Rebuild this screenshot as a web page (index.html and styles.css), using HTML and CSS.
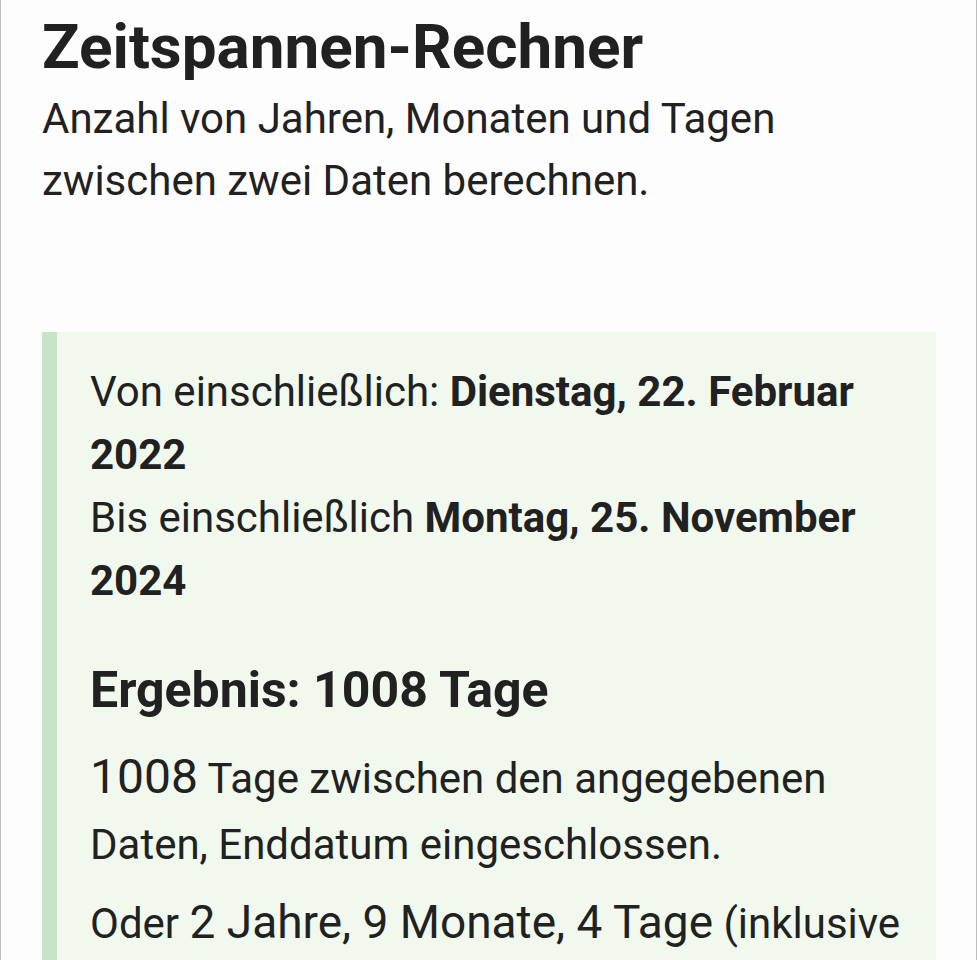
FILE: index.html
```html
<!DOCTYPE html>
<html lang="de">
<head>
    <meta charset="UTF-8">
    <meta name="viewport" content="width=device-width, initial-scale=1.0">
    <title>Zeitspannen-Rechner</title>
    <link rel="stylesheet" href="styles.css">
</head>
<body>
    <div class="page">
        <h1>Zeitspannen-Rechner</h1>
        <p class="subtitle">Anzahl von Jahren, Monaten und Tagen zwischen zwei Daten berechnen.</p>

        <div class="result-box">
            <p class="dates">
                Von einschließlich: <b>Dienstag, 22. Februar 2022</b><br>
                Bis einschließlich <b>Montag, 25. November 2024</b>
            </p>

            <h2>Ergebnis: 1008 Tage</h2>

            <p><span class="big">1008</span> Tage zwischen den angegebenen Daten, Enddatum eingeschlossen.</p>
            <p>Oder <span class="mid">2 Jahre, 9 Monate, 4 Tage</span> (inklusive Enddatum).</p>
        </div>
    </div>
</body>
</html>
```

FILE: styles.css
```css
html, body {
    margin: 0;
    padding: 0;
    background-color: #fdfdfd;
}
body {
    font-family: Roboto, "Liberation Sans", Arial, sans-serif;
    color: #212121;
}
.page {
    width: 977px;
    min-height: 960px;
    box-sizing: border-box;
    padding: 10px 40px 40px 41px;
    border-left: 1px solid #bdbdbd;
    border-right: 1px solid #bdbdbd;
}
h1 {
    font-size: 62px;
    font-weight: bold;
    line-height: 1.2;
    margin: 0;
}
.subtitle {
    font-size: 42px;
    line-height: 62px;
    margin: 4px 0 0;
}
.result-box {
    margin-top: 120px;
    background-color: #f1f9ee;
    border-left: 15px solid #c8e4c6;
    padding: 28px 28px 20px 33px;
}
.result-box p {
    font-size: 42px;
    line-height: 1.5;
    margin: 0 0 12px;
}
.result-box .dates {
    margin: 0;
}
.result-box b {
    font-weight: bold;
}
h2 {
    font-size: 50px;
    font-weight: bold;
    line-height: 1.2;
    margin: 48px 0 21px;
}
.big {
    font-size: 48px;
}
.mid {
    font-size: 46px;
}
```
